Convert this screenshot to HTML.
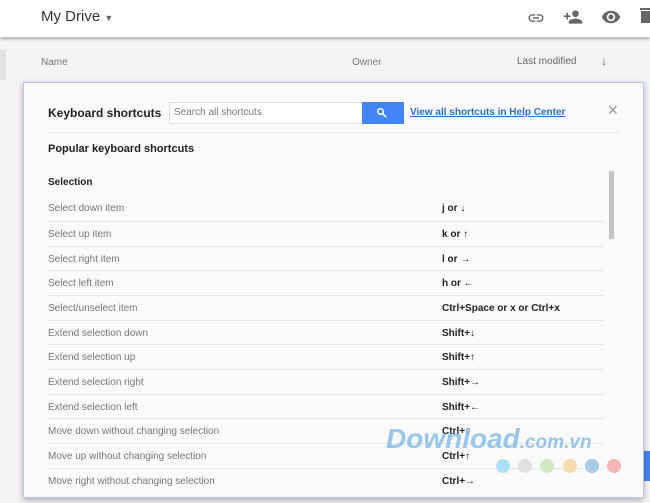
<!DOCTYPE html>
<html><head><style>
body{margin:0;width:650px;height:503px;overflow:hidden;background:#fff;font-family:"Liberation Sans",sans-serif;position:relative}
.hdr{position:absolute;left:0;top:0;width:650px;height:37px;background:#fff;box-shadow:0 2px 3px rgba(0,0,0,.3);z-index:2}
.bg{position:absolute;left:0;top:38px;width:650px;height:465px;background:#f4f4f4}
.dlg{position:absolute;left:23px;top:82px;width:619px;height:414px;background:#fafafa;border:1px solid #b8c8e0;box-shadow:0 2px 6px rgba(0,0,0,.3);z-index:3}
.t{position:absolute;white-space:nowrap}
.row{position:absolute;left:24px;width:556px;height:24px;border-top:1px solid #e6e6e6;font-size:10px;color:#777}
.row span{position:absolute;top:7px}
.row b{position:absolute;left:394px;top:7px;color:#222;font-size:10px}
</style></head><body>
<div class="hdr">
<div class="t" style="left:41px;top:8px;font-size:15px;color:#333">My Drive <span style="font-size:9px;color:#666">▼</span></div>
<svg style="position:absolute;left:527px;top:9px" width="18" height="18" viewBox="0 0 24 24"><path fill="#666" d="M3.9 12c0-1.7 1.4-3.1 3.1-3.1h4V7H7c-2.8 0-5 2.2-5 5s2.2 5 5 5h4v-1.9H7c-1.7 0-3.1-1.4-3.1-3.1zM8 13h8v-2H8v2zm9-6h-4v1.9h4c1.7 0 3.1 1.4 3.1 3.1s-1.4 3.1-3.1 3.1h-4V17h4c2.8 0 5-2.2 5-5s-2.2-5-5-5z"/></svg>
<svg style="position:absolute;left:563px;top:7px" width="20" height="20" viewBox="0 0 24 24"><path fill="#666" d="M15 12c2.2 0 4-1.8 4-4s-1.8-4-4-4-4 1.8-4 4 1.8 4 4 4zm-9-2V7H4v3H1v2h3v3h2v-3h3v-2H6zm9 4c-2.7 0-8 1.3-8 4v2h16v-2c0-2.7-5.3-4-8-4z"/></svg>
<svg style="position:absolute;left:601px;top:7px" width="20" height="20" viewBox="0 0 24 24"><path fill="#666" d="M12 4.5C7 4.5 2.7 7.6 1 12c1.7 4.4 6 7.5 11 7.5s9.3-3.1 11-7.5c-1.7-4.4-6-7.5-11-7.5zM12 17c-2.8 0-5-2.2-5-5s2.2-5 5-5 5 2.2 5 5-2.2 5-5 5zm0-8c-1.7 0-3 1.3-3 3s1.3 3 3 3 3-1.3 3-3-1.3-3-3-3z"/></svg>
<div style="position:absolute;left:640px;top:8px;width:10px;height:2px;background:#666"></div>
<div style="position:absolute;left:641px;top:11px;width:9px;height:12px;background:#666"></div>
</div>
<div class="bg">
<div style="position:absolute;left:0;top:12px;width:6px;height:30px;background:#e2e2e2"></div>
<div class="t" style="left:41px;top:19px;font-size:10px;color:#777">Name</div>
<div class="t" style="left:352px;top:19px;font-size:10px;color:#777">Owner</div>
<div class="t" style="left:517px;top:18px;font-size:10px;color:#666">Last modified</div>
<div class="t" style="left:601px;top:16px;font-size:12px;color:#666">↓</div>
<div style="position:absolute;left:642px;top:413px;width:8px;height:30px;background:#4285f4"></div>
<div style="position:absolute;left:42px;top:427px;width:11px;height:10px;background:#c33"></div>
<div class="t" style="left:70px;top:425px;font-size:10px;color:#333">Timer</div>
<div class="t" style="left:352px;top:425px;font-size:10px;color:#999">me</div>
<div class="t" style="left:518px;top:425px;font-size:10px;color:#999">2:33 PM me</div>
</div>
<div class="dlg">
<div class="t" style="left:24px;top:23px;font-size:12px;font-weight:bold;color:#222">Keyboard shortcuts</div>
<div style="position:absolute;left:145px;top:19px;width:192px;height:20px;border:1px solid #ddd;background:#fff"></div>
<div class="t" style="left:150px;top:24px;font-size:10px;color:#777">Search all shortcuts</div>
<div style="position:absolute;left:338px;top:19px;width:42px;height:22px;background:#4285f4"></div>
<svg style="position:absolute;left:352px;top:24px" width="12" height="12" viewBox="0 0 24 24"><circle cx="9" cy="9" r="5.5" fill="none" stroke="#fff" stroke-width="3"/><path d="M13 13l7 7" stroke="#fff" stroke-width="3.5"/></svg>
<div class="t" style="left:386px;top:24px;font-size:10px;color:#2a6fd6;text-decoration:underline;font-weight:bold">View all shortcuts in Help Center</div>
<div class="t" style="left:583px;top:19px;font-size:14px;color:#999">✕</div>
<div style="position:absolute;left:24px;top:49px;width:572px;height:1px;background:#e6e6e6"></div>
<div class="t" style="left:24px;top:60px;font-size:11px;font-weight:bold;color:#222">Popular keyboard shortcuts</div>
<div class="t" style="left:24px;top:94px;font-size:10px;font-weight:bold;color:#222">Selection</div>
<div style="position:absolute;left:585px;top:88px;width:5px;height:68px;background:#c4c4c4"></div>
<div class="row" style="top:113px;border-top:none"><span>Select down item</span><b>j or ↓</b></div>
<div class="row" style="top:138px"><span>Select up item</span><b>k or ↑</b></div>
<div class="row" style="top:163px"><span>Select right item</span><b>l or →</b></div>
<div class="row" style="top:187px"><span>Select left item</span><b>h or ←</b></div>
<div class="row" style="top:212px"><span>Select/unselect item</span><b>Ctrl+Space or x or Ctrl+x</b></div>
<div class="row" style="top:237px"><span>Extend selection down</span><b>Shift+↓</b></div>
<div class="row" style="top:261px"><span>Extend selection up</span><b>Shift+↑</b></div>
<div class="row" style="top:286px"><span>Extend selection right</span><b>Shift+→</b></div>
<div class="row" style="top:311px"><span>Extend selection left</span><b>Shift+←</b></div>
<div class="row" style="top:335px"><span>Move down without changing selection</span><b>Ctrl+↓</b></div>
<div class="row" style="top:360px"><span>Move up without changing selection</span><b>Ctrl+↑</b></div>
<div class="row" style="top:385px"><span>Move right without changing selection</span><b>Ctrl+→</b></div>
<div class="t" style="left:362px;top:340px;font-size:28px;font-weight:bold;font-style:italic;color:rgba(120,180,230,.75)">Download<span style="font-size:19px">.com.vn</span></div>
<div style="position:absolute;left:472px;top:376px;width:14px;height:14px;border-radius:50%;background:#aee0f5"></div>
<div style="position:absolute;left:494px;top:376px;width:14px;height:14px;border-radius:50%;background:#e2e2e2"></div>
<div style="position:absolute;left:516px;top:376px;width:14px;height:14px;border-radius:50%;background:#cfe9c0"></div>
<div style="position:absolute;left:539px;top:376px;width:14px;height:14px;border-radius:50%;background:#f8dcae"></div>
<div style="position:absolute;left:561px;top:376px;width:14px;height:14px;border-radius:50%;background:#a8cbe8"></div>
<div style="position:absolute;left:583px;top:376px;width:14px;height:14px;border-radius:50%;background:#f5b5b5"></div>
</div>
</body></html>
